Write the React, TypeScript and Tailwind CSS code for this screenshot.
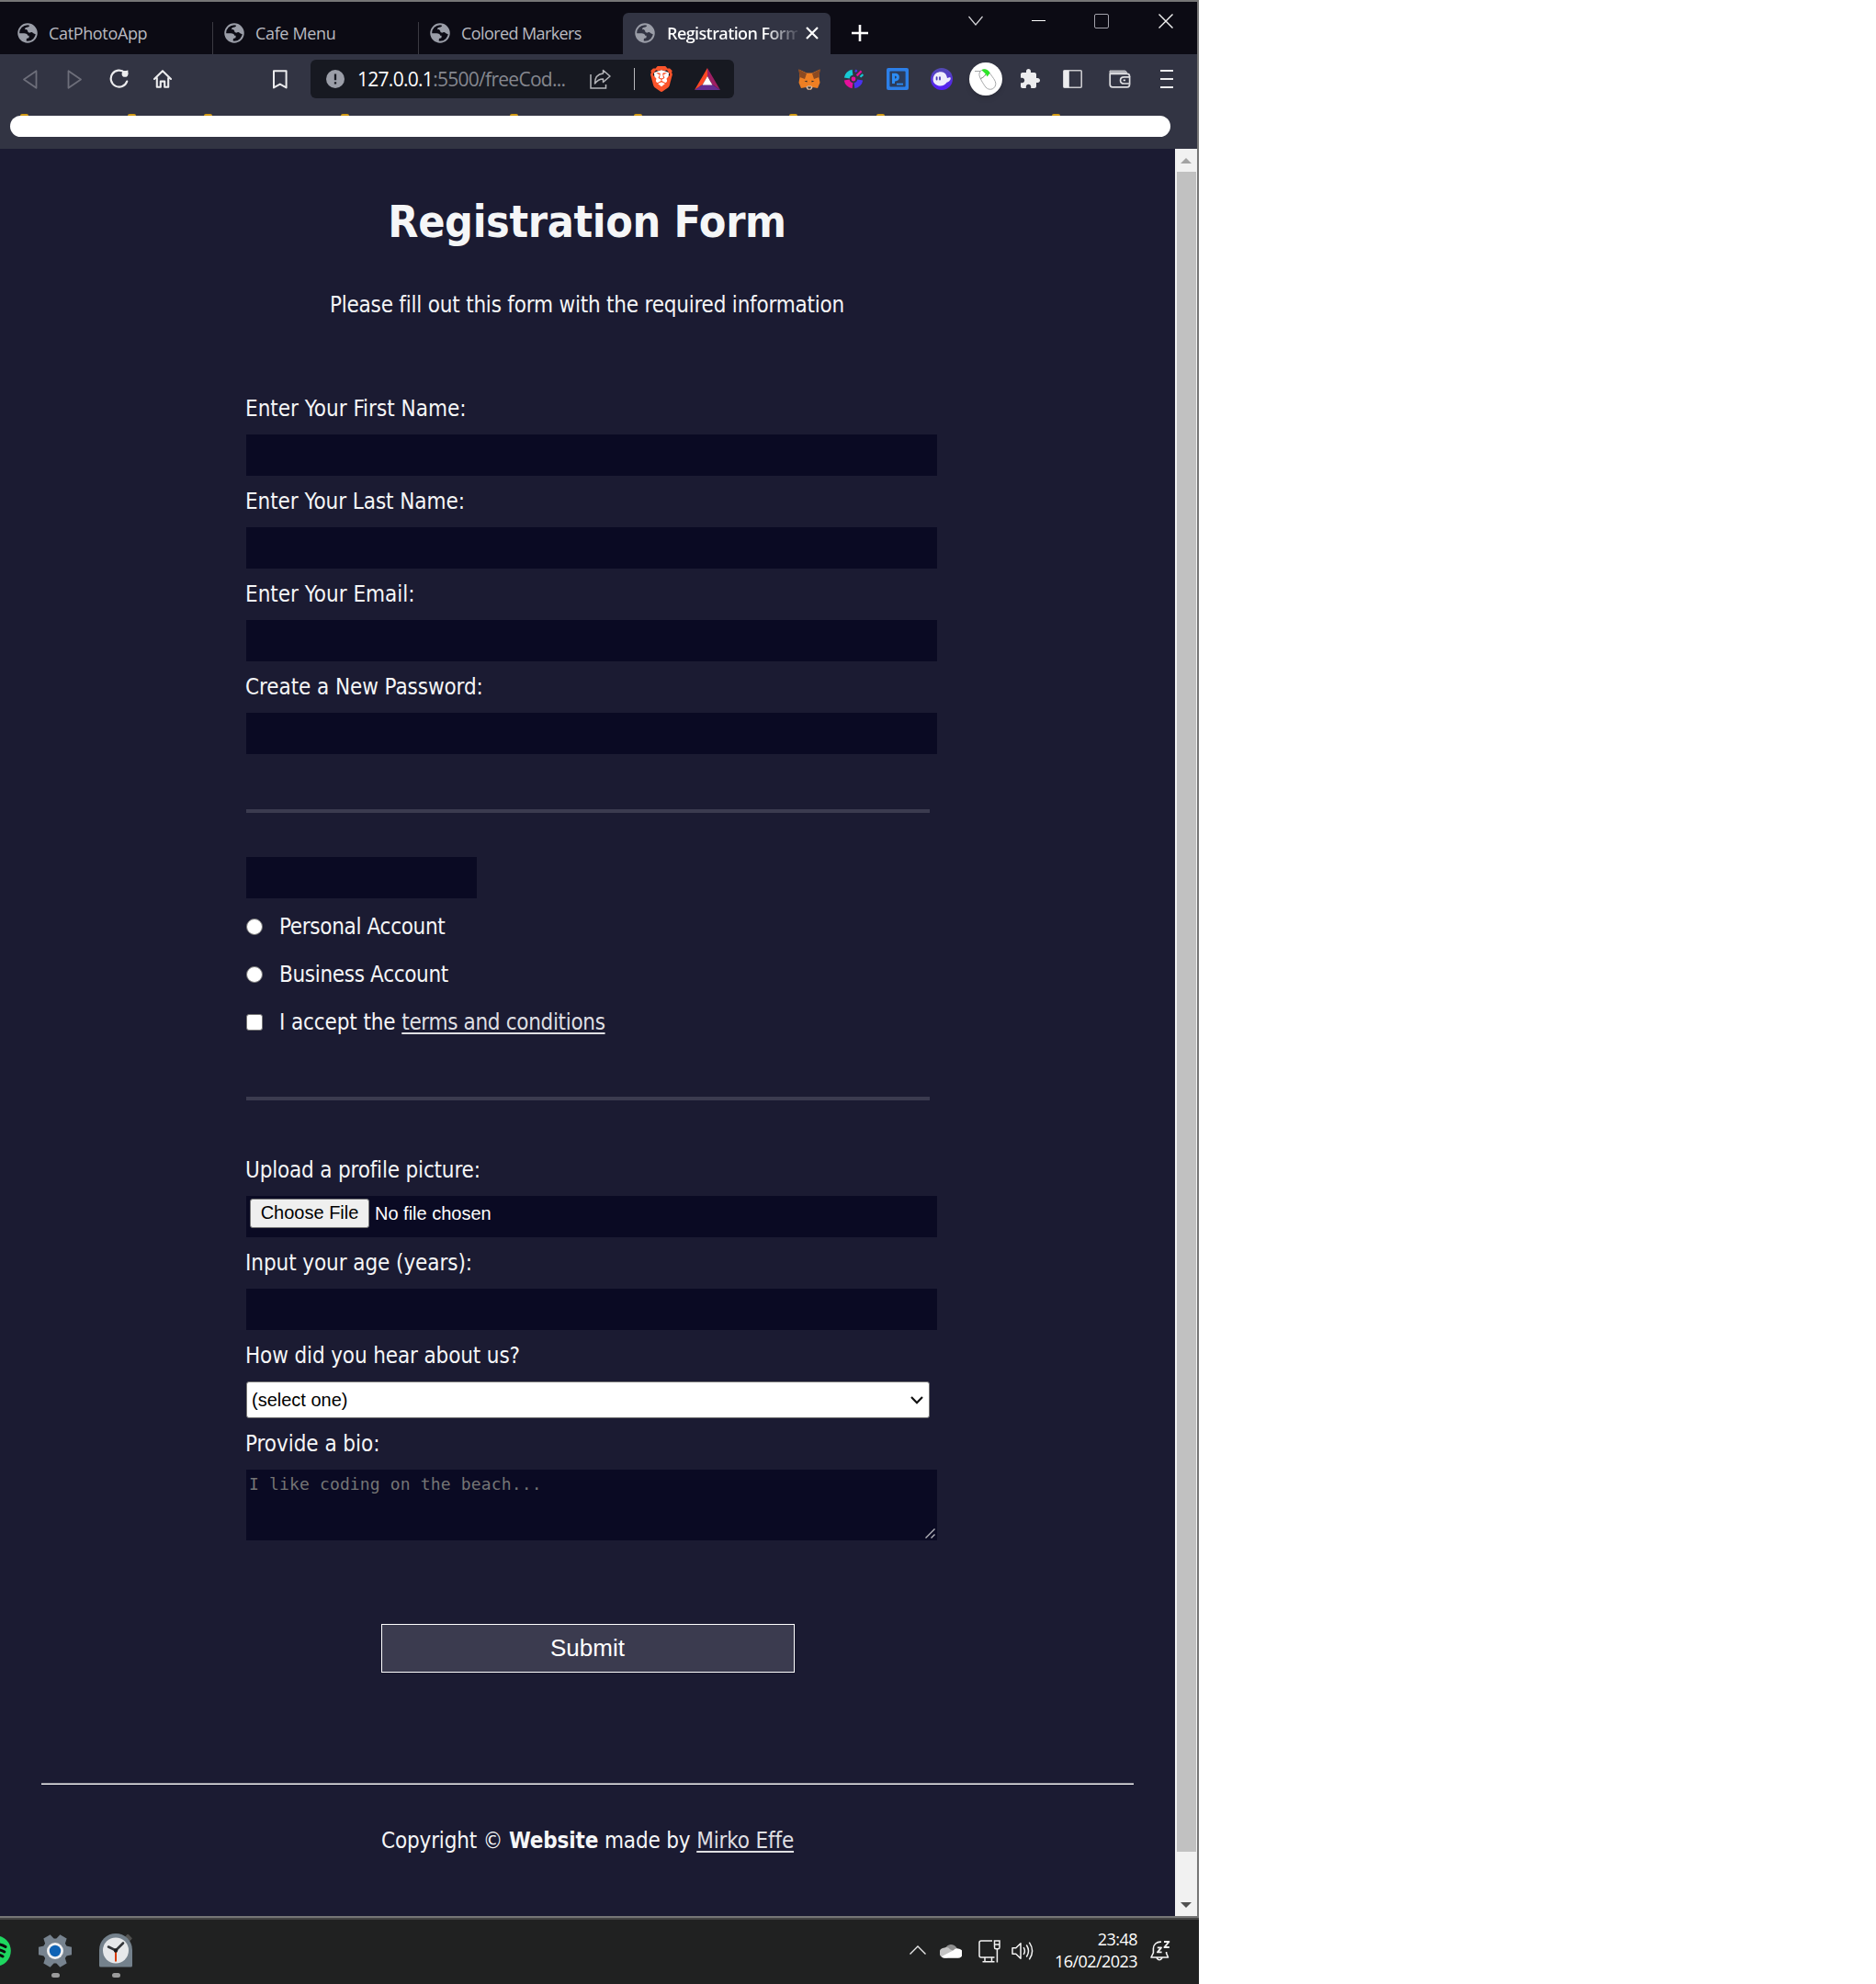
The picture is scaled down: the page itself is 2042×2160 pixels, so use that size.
import type { ReactNode } from "react";
import { SiBrave } from "react-icons/si";

const folderTabs = ["ml-[22px]", "ml-[108px]", "ml-[74px]", "ml-[140px]", "ml-[175px]", "ml-[126px]", "ml-[160px]", "ml-[86px]", "ml-[182px]"];

function Globe() {
  return (
    <svg viewBox="0 0 22 22" className="size-[22px] shrink-0">
      <circle cx="11" cy="11" r="9.8" fill="none" stroke="#9b9ea8" strokeWidth="1.9" />
      <path d="M1.5 11.2 H7.2 C9.6 11.2 11.2 12.3 11.2 13.8 H12.6 V15.6 C12.6 16.8 11 16.6 10 17 C9.6 18.4 9.8 19.6 9.6 20.4 A10 10 0 0 1 1.5 11.2 Z" fill="#9b9ea8" />
      <path d="M13.2 1.6 C13 3.2 13.2 4.2 11.4 4.6 C9.8 4.9 8 5.2 8 6.6 C8.2 7.8 10.2 7.2 11 8.2 C11.4 9 11.2 10.4 12.8 10.6 C14 10.8 14.6 9.8 16 10.2 C17.4 10.6 17.2 12.2 20.6 12 A10 10 0 0 0 13.2 1.6 Z" fill="#9b9ea8" />
    </svg>
  );
}

function Tab({ children, className }: { children: ReactNode; className: string }) {
  return (
    <div className={`flex h-[45px] shrink-0 items-center pb-0.5 ${className}`}>
      <Globe />
      {children}
    </div>
  );
}

function TabStrip() {
  return (
    <div className="flex h-[57px] items-start bg-[#0c0b14] pt-3 font-['Open_Sans',sans-serif] text-[18px] leading-6 text-[#b9bac0]">
      <Tab className="w-[231px] pl-[19px]">
        <span className="ml-[12px] tracking-[-0.35px]">CatPhotoApp</span>
      </Tab>
      <div className="mt-2.5 h-[35px] w-px bg-[#3b3a42]" />
      <Tab className="w-[223px] pl-[12px]">
        <span className="ml-[12px] tracking-[-0.35px]">Cafe Menu</span>
      </Tab>
      <div className="mt-2.5 h-[35px] w-px bg-[#3b3a42]" />
      <Tab className="w-[222px] pl-[12px]">
        <span className="ml-[12px] tracking-[-0.6px]">Colored Markers</span>
      </Tab>
      <Tab className="w-[226px] rounded-t-md bg-[#323443] pl-[13px]">
        <span className="ml-[13px] w-[142px] whitespace-nowrap bg-gradient-to-r from-white from-75% to-[#4a4c5a] bg-clip-text font-semibold tracking-[-0.6px] text-transparent">
          Registration Form
        </span>
        <svg viewBox="0 0 14 14" className="ml-[9px] size-[14px] shrink-0" stroke="#fff" strokeWidth="2.2">
          <path d="M1 1 L13 13 M13 1 L1 13" />
        </svg>
      </Tab>
      <svg viewBox="0 0 18 18" className="mt-[13px] ml-[23px] size-[18px]" stroke="#fff" strokeWidth="2.6">
        <path d="M9 0 V18 M0 9 H18" />
      </svg>
      <svg viewBox="0 0 16 12" className="mt-[3px] ml-[109px] h-3 w-4" fill="none" stroke="#d5d5d8" strokeWidth="1.2">
        <path d="M0.5 1 L8 10 L15.5 1" />
      </svg>
      <div className="mt-2 ml-[53px] h-px w-[15px] bg-white" />
      <div className="mt-px ml-[53px] size-4 rounded-[2px] border-[1.5px] border-[#a3a2ab]" />
      <svg viewBox="0 0 16 16" className="mt-px ml-[54px] size-4" stroke="#f2f2f2" strokeWidth="1.4">
        <path d="M0.5 0.5 L15.5 15.5 M15.5 0.5 L0.5 15.5" />
      </svg>
    </div>
  );
}

function AddressBar() {
  return (
    <div className="ml-[25px] flex h-[42px] w-[461px] items-center rounded-md bg-[#171921] pl-[17px]">
      <svg viewBox="0 0 20 20" className="size-5">
        <circle cx="10" cy="10" r="10" fill="#9b9ea8" />
        <path d="M10 4.6 V11.2 M10 13.2 V15.6" stroke="#171921" strokeWidth="2.3" />
      </svg>
      <span className="ml-[14px] w-[239px] whitespace-nowrap font-['Open_Sans',sans-serif] text-[21px] leading-7 tracking-[-0.72px] text-[#85878f]">
        <span className="text-white">127.0.0.1</span>:5500/freeCod...
      </span>
      <svg viewBox="0 0 23 22" className="ml-[14px] h-[22px] w-[23px]" fill="none" stroke="#b4b5b9" strokeWidth="1.5">
        <path d="M1 6 V21 H17.5 V17" />
        <path d="M14.5 1.5 L22 8 L14.5 14.5 V11 C10 11 8 12.5 5.5 16 C5.5 9 9 5.5 14.5 5 Z" strokeLinejoin="round" />
      </svg>
      <div className="ml-[25px] h-6 w-px bg-[#b8b9bd]" />
      <div className="relative ml-4 flex h-[28px] w-[26px] items-center justify-center">
        <svg viewBox="0 0 26 28" className="absolute inset-0">
          <path d="M5 7 L13 4 L21 7 L20.5 16 L13 24 L5.5 16 Z" fill="#fff" />
        </svg>
        <SiBrave className="relative size-[28px] shrink-0 text-[#fb542b]" />
      </div>
      <svg viewBox="0 0 28 24" className="ml-[23px] h-6 w-7">
        <path d="M14 0 V9 L8.8 18 L0 24 Z" fill="#ff4724" />
        <path d="M14 0 V9 L19.2 18 L28 24 Z" fill="#9e1f63" />
        <path d="M0 24 L8.8 18 H19.2 L28 24 Z" fill="#662d91" />
        <path d="M14 9 L19.4 18.5 H8.6 Z" fill="#fff" />
      </svg>
    </div>
  );
}

function Extensions() {
  return (
    <>
      <svg viewBox="0 0 24 23" className="ml-[70px] h-[23px] w-6">
        <path d="M0.5 0.5 L9 4.5 H15 L23.5 0.5 L22.5 9 L23.5 15 L21 21 L15.5 20 L14 22.5 H10 L8.5 20 L3 21 L0.5 15 L1.5 9 Z" fill="#ee7f23" />
        <path d="M0.5 0.5 L9 5 L7 11 L1.5 9 Z M23.5 0.5 L15 5 L17 11 L22.5 9 Z" fill="#8b4a22" />
        <path d="M8.5 20 L10 18.5 H14 L15.5 20 L14 22.5 H10 Z" fill="#d8c6b8" />
        <path d="M10 19.6 H14 L13.2 21.4 H10.8 Z M6.5 13.2 L9.6 12.8 L9.4 14.6 Z M17.5 13.2 L14.4 12.8 L14.6 14.6 Z" fill="#2d2d2d" />
      </svg>
      <svg viewBox="0 0 22 22" className="ml-[25px] size-[22px]">
        <path d="M3.8 10 A7.2 7.2 0 0 1 10 3.8" fill="none" stroke="#17c9d4" strokeWidth="6" />
        <path d="M3.8 12 A7.2 7.2 0 0 0 10 18.2" fill="none" stroke="#e6109b" strokeWidth="6" />
        <path d="M12 18.2 A7.2 7.2 0 0 0 18.2 12" fill="none" stroke="#4a32f0" strokeWidth="6" />
        <circle cx="11" cy="11" r="2.4" fill="#e6109b" />
        <path d="M13 3.2 L14.6 1.2" stroke="#4a32f0" strokeWidth="2.2" />
        <path d="M14.6 7.4 L19.6 2.4" stroke="#e6109b" strokeWidth="2.2" />
        <path d="M18.4 8.8 L21.4 6" stroke="#17c9d4" strokeWidth="2.2" />
      </svg>
      <svg viewBox="0 0 24 24" className="ml-[25px] size-6" fill="none">
        <rect width="24" height="24" rx="2" fill="#2c7fe8" />
        <rect x="3.4" y="3.4" width="17.2" height="17.2" rx="1" fill="#2b3c5c" />
        <path d="M7.5 17 V7.2 H10 A2.9 2.9 0 0 1 10 12.9 H7.5" stroke="#2c8cf5" strokeWidth="3" />
        <path d="M11 17.6 H18" stroke="#2c8cf5" strokeWidth="1.8" />
      </svg>
      <svg viewBox="0 0 24 24" className="ml-6 size-6">
        <defs>
          <linearGradient id="ghost" x1="0" y1="0" x2="0" y2="1">
            <stop offset="0" stopColor="#534bb1" />
            <stop offset="1" stopColor="#551bf9" />
          </linearGradient>
        </defs>
        <circle cx="12" cy="12" r="12" fill="url(#ghost)" />
        <path d="M2.6 12 C3 7 6.8 4 11.4 4.2 C16 4.4 17.6 8 18 11 C19.6 11 20 10 21.6 10.4 C22.4 13 19.6 15.6 17.6 15.8 C15.8 18.6 12.6 20 9 19.4 C5 18.6 2.4 15.8 2.6 12 Z" fill="#eeecfb" />
        <path d="M6.6 10.2 V12.6 M10 10.2 V12.6" stroke="#4a3ab8" strokeWidth="1.8" strokeLinecap="round" />
      </svg>
      <div className="ml-[18px] flex size-9 items-center justify-center rounded-full bg-white shadow-md">
        <svg viewBox="0 0 26 26" className="size-[26px]" fill="none" stroke="#a4a6a8" strokeWidth="1">
          <path d="M1 4.5 H7 M7 4.5 C11 1.5 15 3 18 7.5 C21 12 25 16 23.5 20 C22 25 16 25.5 13 22 C10 18 5 10 6 7 Z" />
          <path d="M7.5 12.5 C10 11.5 12 10 13 7.5" stroke="#777" />
          <path d="M8.5 3.2 C11.5 1.2 15.6 2.6 17.6 6.4 L14.6 10.4 L12.8 7.6 C11.6 6 10 5 8.5 3.2 Z" fill="#2ee52a" stroke="none" />
        </svg>
      </div>
      <svg viewBox="1 1 22 22" className="ml-[19px] size-[22px]" fill="#ececee">
        <path d="M20.5 11H19V7c0-1.1-.9-2-2-2h-4V3.5C13 2.12 11.88 1 10.5 1S8 2.12 8 3.5V5H4c-1.1 0-1.99.9-1.99 2v3.8H3.5c1.49 0 2.7 1.21 2.7 2.7s-1.21 2.7-2.7 2.7H2V20c0 1.1.9 2 2 2h3.8v-1.5c0-1.49 1.21-2.7 2.7-2.7 1.49 0 2.7 1.21 2.7 2.7V22H17c1.1 0 2-.9 2-2v-4h1.5c1.38 0 2.5-1.12 2.5-2.5S21.88 11 20.5 11z" />
      </svg>
      <svg viewBox="0 0 21 20" className="ml-[25px] h-5 w-[21px]">
        <rect x="0.8" y="0.8" width="19.4" height="18.4" rx="1" fill="none" stroke="#c9c9cd" strokeWidth="1.6" />
        <rect x="0.8" y="0.8" width="6" height="18.4" fill="#ececee" />
      </svg>
      <svg viewBox="0 0 24 20" className="ml-[29px] h-5 w-6" fill="none" stroke="#dedee1" strokeWidth="1.7">
        <path d="M1 1 H17 C18.5 1 19.5 2 19.5 3.5 H1 Z" fill="#a9aab1" stroke="#c9c9cd" strokeWidth="1" />
        <path d="M22.5 7.5 V7 C22.5 5 21.5 4.3 20 4.3 H1.2 V16 C1.2 18 2 18.8 4 18.8 H20 C21.7 18.8 22.5 18 22.5 16 V15.5" />
        <path d="M22.6 7.8 H16.6 C11.2 7.8 11.2 15 16.6 15 H22.6 Z" />
        <path d="M15.6 11.4 H18" />
      </svg>
      <div className="ml-8 flex w-[14px] flex-col gap-[7px]">
        <div className="h-[2px] bg-[#ececee]" />
        <div className="h-[2px] bg-[#ececee]" />
        <div className="h-[2px] bg-[#ececee]" />
      </div>
    </>
  );
}

function Toolbar() {
  return (
    <div className="h-[103px] bg-[#323443]">
      <div className="flex h-[54px] items-center">
        <svg viewBox="0 0 16 21" className="ml-[25px] h-[21px] w-4" fill="none" stroke="#6d6e7a" strokeWidth="1.8" strokeLinejoin="round">
          <path d="M14.5 1.2 V19.8 L1 10.5 Z" />
        </svg>
        <svg viewBox="0 0 16 21" className="ml-8 h-[21px] w-4" fill="none" stroke="#6d6e7a" strokeWidth="1.8" strokeLinejoin="round">
          <path d="M1.5 1.2 V19.8 L15 10.5 Z" />
        </svg>
        <svg viewBox="0 0 22 22" className="ml-[30px] size-[22px]">
          <path d="M16.8 4 A9 9 0 1 0 19.2 13.6" fill="none" stroke="#ececee" strokeWidth="2.2" strokeLinecap="round" />
          <circle cx="17" cy="5.4" r="3.4" fill="#ececee" />
          <path d="M16 2.6 L20.4 1.6 V6 Z" fill="#ececee" />
        </svg>
        <svg viewBox="0 0 20 20" className="ml-[26px] size-5" fill="none" stroke="#ececee" strokeWidth="2.1" strokeLinejoin="round" strokeLinecap="round">
          <path d="M1 10 L10 1.2 L19 10 M3.8 9 V18.8 H7.8 V12.6 H12.2 V18.8 H16.2 V9" />
        </svg>
        <svg viewBox="0 0 16 21" className="ml-[110px] h-[21px] w-4" fill="none" stroke="#ececee" strokeWidth="2" strokeLinejoin="round">
          <path d="M1 1.2 H14.6 V19.4 L7.8 15.6 L1 19.4 Z" />
        </svg>
        <AddressBar />
        <Extensions />
      </div>
      <div className="mt-[11px] flex h-[2px]">
        {folderTabs.map((offset) => (
          <div key={offset} className={`h-[2px] w-[9px] shrink-0 rounded-t-sm bg-[#d29a14] ${offset}`} />
        ))}
      </div>
      <div className="ml-[11px] h-[23px] w-[1263px] rounded-full bg-white" />
    </div>
  );
}

function Field({ label, className }: { label: string; className: string }) {
  return (
    <label className="block">
      <span className={`-ml-px ${className}`}>{label}</span>
      <input className="mt-3 mb-3 block h-[45px] w-[752px] bg-[#0a0a23] outline-none" />
    </label>
  );
}

function Divider() {
  return <div className="h-1 w-[744px] bg-[#3b3b4f]" />;
}

function RegistrationForm() {
  return (
    <form className="mt-[81px] ml-[268px] w-[752px]">
      <Field label="Enter Your First Name:" className="tracking-normal" />
      <Field label="Enter Your Last Name:" className="tracking-[-0.06px]" />
      <Field label="Enter Your Email:" className="tracking-normal" />
      <Field label="Create a New Password:" className="tracking-[-0.08px]" />
      <div className="h-12" />
      <Divider />
      <input className="mt-12 block h-[45px] w-[251px] bg-[#0a0a23] outline-none" />
      <div className="mt-[15px] flex flex-col gap-5 tracking-[-0.33px]">
        <div className="flex h-8 items-center">
          <div className="size-[18px] rounded-full border-[1.5px] border-[#767676] bg-white" />
          <span className="ml-[18px]">Personal Account</span>
        </div>
        <div className="flex h-8 items-center">
          <div className="size-[18px] rounded-full border-[1.5px] border-[#767676] bg-white" />
          <span className="ml-[18px]">Business Account</span>
        </div>
        <div className="flex h-8 items-center">
          <div className="size-[18px] rounded-[3px] border-[1.5px] border-[#767676] bg-white" />
          <span className="ml-[18px]">
            <span className="tracking-[-0.12px]">I accept the </span>
            <a className="text-[#dfdfe2] underline decoration-2 underline-offset-[3px] [text-decoration-skip-ink:none]">terms and conditions</a>
          </span>
        </div>
      </div>
      <div className="h-[65px]" />
      <Divider />
      <div className="mt-[60px] -ml-px tracking-[-0.18px]">Upload a profile picture:</div>
      <div className="mt-3 mb-3 flex h-[45px] bg-[#0a0a23] pt-[3px] pl-1 font-['Liberation_Sans',sans-serif] text-[20px] leading-[22px] text-white">
        <div className="flex h-8 w-[130px] items-center justify-center rounded-[3px] border-[1.5px] border-[#767676] bg-[#efefef] pb-0.5 text-black">
          Choose File
        </div>
        <span className="ml-[6px] mt-[5px]">No file chosen</span>
      </div>
      <Field label="Input your age (years):" className="tracking-[-0.08px]" />
      <div className="-ml-px tracking-[-0.13px]">How did you hear about us?</div>
      <div className="mt-3 mb-3 flex h-10 w-[744px] items-center justify-between rounded-[3px] border border-[#767676] bg-white pr-[6px] pl-[5px] font-['Liberation_Sans',sans-serif] text-[20px] leading-6 text-black">
        (select one)
        <svg viewBox="0 0 14 9" className="h-[9px] w-[14px]" fill="none" stroke="#111" strokeWidth="2.2">
          <path d="M1 1 L7 7.2 L13 1" />
        </svg>
      </div>
      <div className="-ml-px tracking-[-0.05px]">Provide a bio:</div>
      <div className="mt-3 flex h-[77px] items-start justify-between bg-[#0a0a23] pl-[3px]">
        <span className="mt-1 font-['DejaVu_Sans_Mono',monospace] text-[18px] leading-6 tracking-[0.15px] text-[#757575]">I like coding on the beach...</span>
        <svg viewBox="0 0 11 11" className="mr-[2px] mb-[2px] size-[11px] self-end" stroke="#b5b5bb" strokeWidth="1.4">
          <path d="M0.5 10.5 L10.5 0.5 M6.5 10.5 L10.5 6.5" />
        </svg>
      </div>
      <button
        type="button"
        className="mt-[91px] ml-[147px] block h-[53px] w-[450px] border border-white bg-[#3b3b4f] pr-px pb-0.5 font-['Liberation_Sans',sans-serif] text-[26px] leading-8 text-white"
      >
        Submit
      </button>
    </form>
  );
}

function Page() {
  return (
    <div className="h-[1924px] w-[1279px] bg-[#1b1b32] pt-[51px] font-['DejaVu_Sans_Condensed','DejaVu_Sans',sans-serif] text-[24px] leading-8 text-[#f5f6f7]">
      <h1 className="pr-px text-center text-[48px] leading-[56px] font-bold tracking-[-0.35px]">Registration Form</h1>
      <p className="mt-[47px] pr-px text-center tracking-[-0.21px]">Please fill out this form with the required information</p>
      <RegistrationForm />
      <div className="mt-[120px] ml-[45px] h-[2px] w-[1189px] border-t border-b border-t-[#8f8f98] border-b-[#eeeeee]" />
      <p className="mt-[45px] text-center tracking-[-0.15px]">
        Copyright © <b>Website</b> made by{" "}
        <a className="text-[#dfdfe2] underline decoration-2 underline-offset-[3px] [text-decoration-skip-ink:none]">Mirko Effe</a>
      </p>
    </div>
  );
}

function Scrollbar() {
  return (
    <div className="flex h-[1924px] w-6 flex-col items-center bg-[#f1f1f1]">
      <svg viewBox="0 0 12 6" className="mt-[10px] h-[6px] w-3" fill="#a3a3a3">
        <path d="M6 0 L12 6 H0 Z" />
      </svg>
      <div className="mt-[9px] h-[1829px] w-[21px] bg-[#c1c1c1]" />
      <svg viewBox="0 0 12 6" className="mt-[55px] h-[6px] w-3" fill="#505050">
        <path d="M6 6 L0 0 H12 Z" />
      </svg>
    </div>
  );
}

function Taskbar() {
  return (
    <div className="flex h-[72px] w-[1305px] items-start overflow-hidden border-t-2 border-[#444444] bg-[#202121]">
      <svg viewBox="0 0 12 34" className="mt-[17px] h-[34px] w-3">
        <circle cx="-5" cy="17" r="16.8" fill="#1ed760" />
        <path d="M-5 9.5 Q1.5 9.5 6 12.6 M-5 15.5 Q1 15.5 4.8 18 M-5 21 Q0 21 3 23" fill="none" stroke="#0c0c0c" strokeWidth="3" strokeLinecap="round" />
      </svg>
      <div className="mt-4 ml-[30px] flex w-9 flex-col items-center">
        <svg viewBox="-18 -18 36 36" className="size-9">
          <g fill="#77838f">
            <circle r="13.5" />
            <path d="M-18 -4.2 L-12 -5.5 H12 L18 -4.2 V4.2 L12 5.5 H-12 L-18 4.2 Z" />
            <path d="M-18 -4.2 L-12 -5.5 H12 L18 -4.2 V4.2 L12 5.5 H-12 L-18 4.2 Z" transform="rotate(60)" />
            <path d="M-18 -4.2 L-12 -5.5 H12 L18 -4.2 V4.2 L12 5.5 H-12 L-18 4.2 Z" transform="rotate(120)" />
          </g>
          <circle r="9" fill="#f1f1f2" />
          <circle r="6.2" fill="#0f63b5" />
        </svg>
        <div className="mt-[6px] h-[5px] w-[9px] rounded-full bg-[#9b9b9b]" />
      </div>
      <div className="mt-[15px] ml-[30px] flex w-9 flex-col items-center">
        <svg viewBox="0 0 36 37" className="h-[37px] w-9">
          <rect x="28" y="2" width="7" height="6" rx="1" fill="#51514f" transform="rotate(45 31.5 5)" />
          <path d="M0 18 A18 18 0 0 1 36 18 V35 Q36 36.5 34.5 36.5 H1.5 Q0 36.5 0 35 Z" fill="#74818c" />
          <circle cx="18" cy="18.5" r="14" fill="#e6e8ea" />
          <path d="M10 14.5 L18 18.5 L26 10.5" fill="none" stroke="#33363a" strokeWidth="2.6" strokeLinecap="round" />
          <path d="M18 19 V30.5" stroke="#d83b01" strokeWidth="2" />
          <circle cx="18" cy="18.5" r="2.2" fill="#1c1c1c" />
        </svg>
        <div className="mt-[6px] h-[5px] w-[9px] rounded-full bg-[#9b9b9b]" />
      </div>
      <svg viewBox="0 0 18 10" className="mt-[28px] ml-[846px] h-[10px] w-[18px]" fill="none" stroke="#e8e8e8" strokeWidth="1.4">
        <path d="M0.5 9.5 L9 1 L17.5 9.5" />
      </svg>
      <svg viewBox="0 0 24 16" className="mt-[26px] ml-[15px] h-4 w-6">
        <path d="M6 5 A7 7 0 0 1 18 4 L20 8 L6 9 Z" fill="#8f8f8f" />
        <path d="M5 15.5 A5.3 5.3 0 0 1 5 4.5 Q8.5 3 11.5 6.5 L18 9 L8 15.5 Z" fill="#c4c4c4" />
        <path d="M2 14 L14.5 7.5 Q17 4.6 20 5.4 A5 5 0 0 1 19.5 15.8 H5 Q3 15.8 2 14 Z" fill="#fff" />
      </svg>
      <svg viewBox="0 0 24 25" className="mt-[22px] ml-[18px] h-[25px] w-6" fill="none" stroke="#f2f2f2" strokeWidth="1.5">
        <path d="M15 1 H3 Q1 1 1 3 V17 Q1 19 3 19 H17.5 M7 19 V23.5 M14.5 19 V23.5 M4.5 23.8 H17.5" />
        <path d="M17.5 1 H23 V8 Q23 9.8 21.4 9.8 H19 Q17.5 9.8 17.5 8 Z M17.5 5 H23 M20.4 10 V24.5" />
      </svg>
      <svg viewBox="0 0 24 20" className="mt-[24px] ml-3 h-5 w-6" fill="none" stroke="#f2f2f2" strokeWidth="1.5" strokeLinejoin="round" strokeLinecap="round">
        <path d="M1 6.8 H4.8 L10 1.8 V18.2 L4.8 13.2 H1 Z" />
        <path d="M13.4 6.6 Q15.4 10 13.4 13.4 M16.6 4 Q20.4 10 16.6 16 M19.6 1.2 Q25.6 10 19.6 18.8" />
      </svg>
      <div className="mt-[9px] ml-[13px] w-[100px] text-right font-['Open_Sans',sans-serif] text-[18px] leading-6 tracking-[-0.55px] text-white">
        <div>23:48</div>
        <div>16/02/2023</div>
      </div>
      <svg viewBox="0 0 22 22" className="mt-[23px] ml-[14px] size-[22px]" fill="none" stroke="#f2f2f2" strokeWidth="1.6" strokeLinejoin="round">
        <path d="M12 1.2 C7 0.8 3.4 4 3.4 8.5 V13 L1 18 H19.5 L17.6 13.5 V12 M7 18.5 Q10 23 13 18.5" />
        <path d="M7.8 7.4 H12 L8 12.4 H12.6 M15 1 H20.4 L15.4 7 H20.8" strokeWidth="1.9" />
      </svg>
    </div>
  );
}

export default function App() {
  return (
    <div className="h-[2160px] w-[2042px] overflow-hidden bg-white">
      <div className="w-[1305px] border-t-2 border-r-2 border-b-2 border-[#767676]">
        <TabStrip />
        <Toolbar />
        <div className="flex">
          <Page />
          <Scrollbar />
        </div>
      </div>
      <Taskbar />
    </div>
  );
}
